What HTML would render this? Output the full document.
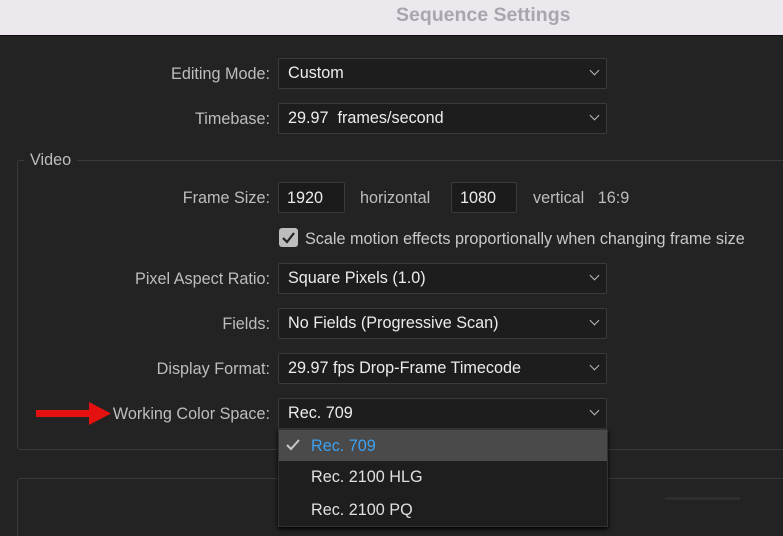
<!DOCTYPE html><html><head><style>
html,body{margin:0;width:783px;height:536px;overflow:hidden}
body{background:#232323;font-family:"Liberation Sans",sans-serif;font-size:16.2px;position:relative}
.t{position:absolute;left:0;top:0;width:783px;height:35px;background:#ece8ee;border-bottom:1px solid #111}
.t span{position:absolute;left:396px;top:4px;font-weight:bold;font-size:19.5px;color:#aaa6ad}
.l{position:absolute;color:#bdbdbd;text-align:right;right:513px;white-space:nowrap}
.d{position:absolute;left:278px;width:327px;height:29px;background:#1d1d1d;border:1px solid #3a3a3a;border-radius:2px;color:#ececec}
.d span{position:absolute;left:9px;top:5px}
.d i{position:absolute;right:8px;top:8px;width:6px;height:6px;border-right:1.5px solid #bbb;border-bottom:1.5px solid #bbb;transform:rotate(45deg)}
.in{position:absolute;top:182px;height:29px;background:#1b1b1b;border:1px solid #3a3a3a;border-radius:2px;color:#ececec}
.in span{position:absolute;left:8px;top:6px}
.tx{position:absolute;color:#bdbdbd;white-space:nowrap}
</style></head><body>
<div class="t"><span>Sequence Settings</span></div>
<div class="l" style="top:65px">Editing Mode:</div>
<div class="d" style="top:58px"><span>Custom</span><i></i></div>
<div class="l" style="top:110px">Timebase:</div>
<div class="d" style="top:103px"><span>29.97&nbsp; frames/second</span><i></i></div>
<div style="position:absolute;left:17px;top:160px;width:780px;height:288px;border:1px solid #3a3a3a;border-radius:3px"></div>
<div style="position:absolute;left:24px;top:151px;background:#232323;padding:0 6px;color:#bdbdbd">Video</div>
<div class="l" style="top:189px">Frame Size:</div>
<div class="in" style="left:278px;width:65px"><span>1920</span></div>
<div class="tx" style="left:360px;top:189px">horizontal</div>
<div class="in" style="left:451px;width:64px"><span>1080</span></div>
<div class="tx" style="left:533px;top:189px">vertical&nbsp;&nbsp; 16:9</div>
<div style="position:absolute;left:279px;top:228px;width:19px;height:19px;background:#bdbdbd;border-radius:3px"><svg width="19" height="19"><path d="M4 10l4 4 7-9" stroke="#222" stroke-width="2.2" fill="none"/></svg></div>
<div class="tx" style="left:305px;top:230px;color:#c8c8c8">Scale motion effects proportionally when changing frame size</div>
<div class="l" style="top:270px">Pixel Aspect Ratio:</div>
<div class="d" style="top:263px"><span>Square Pixels (1.0)</span><i></i></div>
<div class="l" style="top:315px">Fields:</div>
<div class="d" style="top:308px"><span>No Fields (Progressive Scan)</span><i></i></div>
<div class="l" style="top:360px">Display Format:</div>
<div class="d" style="top:353px"><span>29.97 fps Drop-Frame Timecode</span><i></i></div>
<div class="l" style="top:405px">Working Color Space:</div>
<div class="d" style="top:398px"><span>Rec. 709</span><i></i></div>
<svg style="position:absolute;left:36px;top:401px" width="76" height="26"><rect x="0" y="9" width="56" height="7" fill="#e51010"/><path d="M53 1L75 12.5 53 24z" fill="#e51010"/></svg>
<div style="position:absolute;left:17px;top:478px;width:780px;height:70px;border:1px solid #3a3a3a;border-radius:3px"></div>
<div style="position:absolute;left:665px;top:497px;width:75px;height:3px;background:#2e2e2e"></div>
<div style="position:absolute;left:278px;top:429px;width:328px;height:96px;background:#1e1e1e;border:1px solid #333;box-shadow:0 2px 4px #000">
<div style="height:31px;background:#4a4a4a;position:relative"><svg style="position:absolute;left:6px;top:8px" width="16" height="14"><path d="M2 7l4 4 8-9" stroke="#c8c8c8" stroke-width="2" fill="none"/></svg><span style="position:absolute;left:32px;top:7px;color:#3ea0f0">Rec. 709</span></div>
<div style="position:relative;height:33px"><span style="position:absolute;left:32px;top:7px;color:#e0e0e0">Rec. 2100 HLG</span></div>
<div style="position:relative;height:32px"><span style="position:absolute;left:32px;top:7px;color:#e0e0e0">Rec. 2100 PQ</span></div>
</div>
</body></html>
